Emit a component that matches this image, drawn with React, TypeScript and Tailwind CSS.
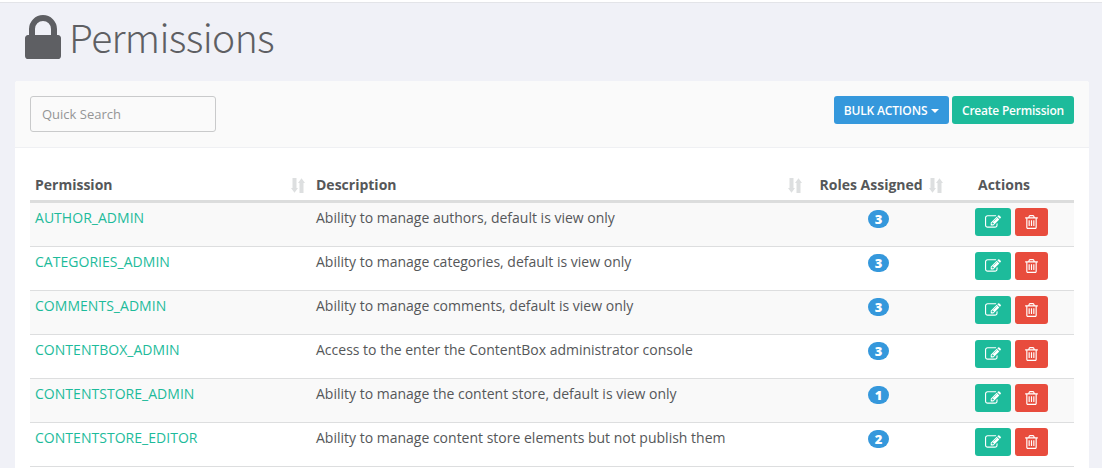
import React from "react";

type Permission = { name: string; description: string; roles: number };

const permissions: Permission[] = [
  { name: "AUTHOR_ADMIN", description: "Ability to manage authors, default is view only", roles: 3 },
  { name: "CATEGORIES_ADMIN", description: "Ability to manage categories, default is view only", roles: 3 },
  { name: "COMMENTS_ADMIN", description: "Ability to manage comments, default is view only", roles: 3 },
  { name: "CONTENTBOX_ADMIN", description: "Access to the enter the ContentBox administrator console", roles: 3 },
  { name: "CONTENTSTORE_ADMIN", description: "Ability to manage the content store, default is view only", roles: 1 },
  { name: "CONTENTSTORE_EDITOR", description: "Ability to manage content store elements but not publish them", roles: 2 },
];

const columns = "grid grid-cols-[281px_498px_146px_120px]";

function LockIcon() {
  return (
    <svg viewBox="320 128 1152 1408" className="h-[44px] w-[36px] shrink-0" fill="currentColor">
      <path d="M640 768h512v-192q0-106-75-181t-181-75-181 75-75 181v192zm832 96v576q0 40-28 68t-68 28h-960q-40 0-68-28t-28-68v-576q0-40 28-68t68-28h32v-192q0-184 132-316t316-132 316 132 132 316v192h32q40 0 68 28t28 68z" />
    </svg>
  );
}

function EditIcon() {
  return (
    <svg viewBox="0 0 1792 1792" className="size-4 shrink-0" fill="currentColor">
      <path d="M888 1184l116-116-152-152-116 116v56h96v96h56zm440-720q-16-16-33 1l-350 350q-17 17-1 33t33-1l350-350q17-17 1-33zm80 594v190q0 119-84.5 203.5t-203.5 84.5h-832q-119 0-203.5-84.5t-84.5-203.5v-832q0-119 84.5-203.5t203.5-84.5h832q63 0 117 25 15 7 18 23 3 17-9 29l-49 49q-14 14-32 8-23-6-45-6h-832q-66 0-113 47t-47 113v832q0 66 47 113t113 47h832q66 0 113-47t47-113v-126q0-13 9-22l64-64q15-15 35-7t20 29zm-96-738l288 288-672 672h-288v-288zm444 132l-92 92-288-288 92-92q28-28 68-28t68 28l152 152q28 28 28 68t-28 68z" />
    </svg>
  );
}

function TrashIcon() {
  return (
    <svg viewBox="192 128 1408 1536" className="h-[14px] w-[13px] shrink-0" fill="currentColor">
      <path d="M704 736v576q0 14-9 23t-23 9h-64q-14 0-23-9t-9-23v-576q0-14 9-23t23-9h64q14 0 23 9t9 23zm256 0v576q0 14-9 23t-23 9h-64q-14 0-23-9t-9-23v-576q0-14 9-23t23-9h64q14 0 23 9t9 23zm256 0v576q0 14-9 23t-23 9h-64q-14 0-23-9t-9-23v-576q0-14 9-23t23-9h64q14 0 23 9t9 23zm128 724v-948h-896v948q0 22 7 40.5t14.5 27 10.5 8.5h832q3 0 10.5-8.5t14.5-27 7-40.5zm-672-1076h448l-48-117q-7-9-17-11h-317q-10 2-17 11zm928 32v64q0 14-9 23t-23 9h-96v948q0 83-47 143.5t-113 60.5h-832q-66 0-113-58.5t-47-141.5v-952h-96q-14 0-23-9t-9-23v-64q0-14 9-23t23-9h309l70-167q15-37 54-63t79-26h320q40 0 79 26t54 63l70 167h309q14 0 23 9t9 23z" />
    </svg>
  );
}

function SortIcon() {
  return (
    <svg viewBox="0 0 14 15" className="h-[15px] w-[14px] shrink-0" fill="#dddfe0">
      <path d="M1.500 0h4v10H7L3.500 14.800 0 10h1.500zM8.500 15h4V5H14L10.500.200 7 5h1.500z" />
    </svg>
  );
}

export default function App() {
  return (
    <div className="flex h-[468px] w-full flex-col overflow-hidden bg-[#f0f1f7] font-['Open_Sans',sans-serif] text-sm text-[#555759]">
      <div className="h-[3px] shrink-0 border-b border-[#e3e4e8] bg-white" />
      <header className="flex h-[78px] shrink-0 pt-3 pl-[25px] text-[#5e5f63]">
        <LockIcon />
        <h1 className="ml-[8px] -mt-[3px] font-['Noto_Sans_CJK_SC',sans-serif] text-[39px] leading-[48px] font-light tracking-[-0.65px]">Permissions</h1>
      </header>
      <main className="mr-[13px] ml-[15px] flex grow flex-col rounded-t-[3px] bg-white">
        <div className="flex h-[67px] shrink-0 items-start justify-between rounded-t-[3px] border-b border-[#eff0f3] bg-[#fafafa] px-[15px] pt-[15px]">
          <input
            placeholder="Quick Search"
            className="h-[36px] w-[186px] rounded-[3px] border border-[#c9cacb] bg-transparent px-[11px] text-[13px] outline-none placeholder:text-[#949596]"
          />
          <div className="flex gap-[3px] text-[12px] font-semibold text-white">
            <button className="flex h-7 w-[115px] items-center justify-center gap-1 rounded-[3px] bg-[#3598dc] pt-[2px] tracking-[-0.15px] whitespace-nowrap">
              BULK ACTIONS
              <svg viewBox="0 0 8 4" className="h-1 w-[8px]" fill="currentColor"><path d="M0 0h8L4 4z" /></svg>
            </button>
            <button className="h-7 w-[122px] rounded-[3px] bg-[#1dbb9b] pt-[2px] tracking-[-0.22px] whitespace-nowrap">Create Permission</button>
          </div>
        </div>
        <div className="mr-[15px] ml-[15px] pt-[17px]">
          <div className={`${columns} h-[38px] border-b-[3px] border-[#dcdddd] font-bold`}>
            <div className="flex h-10 items-center justify-between pr-[6px] pl-[5px]">Permission<SortIcon /></div>
            <div className="flex h-10 items-center justify-between pr-[7px] pl-[5px]">Description<SortIcon /></div>
            <div className="flex h-10 items-center justify-between pr-[12px] pl-[10.5px] whitespace-nowrap">Roles Assigned<SortIcon /></div>
            <div className="flex h-10 items-center pl-[23px]">Actions</div>
          </div>
          {permissions.map((p) => (
            <div key={p.name} className={`${columns} h-11 border-b border-[#dddedf] odd:bg-white even:bg-[#f9f9f9]`}>
              <a className="pt-[5px] pl-[5px] leading-5 tracking-[0.03px] text-[#1dbb9b]">{p.name}</a>
              <div className="pt-[5px] pl-[5px] leading-5">{p.description}</div>
              <div className="flex justify-center pt-[7px] pr-[7px]">
                <span className="flex h-[18px] w-[21px] items-center justify-center rounded-full bg-[#3598dc] pt-px text-[13px] leading-none font-extrabold text-white">{p.roles}</span>
              </div>
              <div className="flex gap-1 pt-[5px] pl-[20px] text-white">
                <button className="flex h-7 w-9 items-center justify-center rounded-[3px] bg-[#1dbb9b]"><EditIcon /></button>
                <button className="flex h-7 w-[33px] items-center justify-center rounded-[3px] bg-[#e84c3d]"><TrashIcon /></button>
              </div>
            </div>
          ))}
        </div>
      </main>
    </div>
  );
}
